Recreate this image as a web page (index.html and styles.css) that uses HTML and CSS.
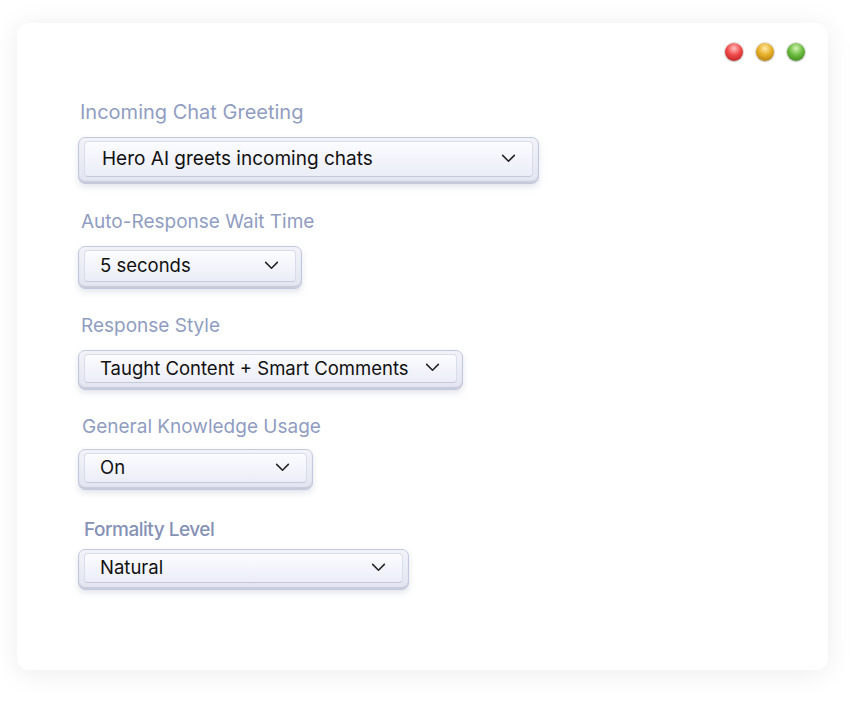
FILE: index.html
```html
<!DOCTYPE html>
<html lang="en">
<head>
    <meta charset="UTF-8">
    <meta name="viewport" content="width=device-width, initial-scale=1.0">
    <title>Hero AI Settings</title>
    <link rel="stylesheet" href="styles.css">
</head>
<body>
    <div class="window">
        <div class="titlebar">
            <span class="light light-red"></span>
            <span class="light light-yellow"></span>
            <span class="light light-green"></span>
        </div>

        <div class="settings">
            <div class="field field-greeting">
                <label class="field-label">Incoming Chat Greeting</label>
                <div class="select select-greeting">
                    <div class="select-face">
                        <span class="select-value">Hero AI greets incoming chats</span>
                        <svg class="chevron" viewBox="0 0 16 10" width="15" height="9"><path d="M1.5 1.5 L8 8 L14.5 1.5" /></svg>
                    </div>
                </div>
            </div>

            <div class="field field-wait">
                <label class="field-label">Auto-Response Wait Time</label>
                <div class="select select-wait">
                    <div class="select-face">
                        <span class="select-value">5 seconds</span>
                        <svg class="chevron" viewBox="0 0 16 10" width="15" height="9"><path d="M1.5 1.5 L8 8 L14.5 1.5" /></svg>
                    </div>
                </div>
            </div>

            <div class="field field-style">
                <label class="field-label">Response Style</label>
                <div class="select select-style">
                    <div class="select-face">
                        <span class="select-value">Taught Content + Smart Comments</span>
                        <svg class="chevron" viewBox="0 0 16 10" width="15" height="9"><path d="M1.5 1.5 L8 8 L14.5 1.5" /></svg>
                    </div>
                </div>
            </div>

            <div class="field field-knowledge">
                <label class="field-label">General Knowledge Usage</label>
                <div class="select select-knowledge">
                    <div class="select-face">
                        <span class="select-value">On</span>
                        <svg class="chevron" viewBox="0 0 16 10" width="15" height="9"><path d="M1.5 1.5 L8 8 L14.5 1.5" /></svg>
                    </div>
                </div>
            </div>

            <div class="field field-formality">
                <label class="field-label">Formality Level</label>
                <div class="select select-formality">
                    <div class="select-face">
                        <span class="select-value">Natural</span>
                        <svg class="chevron" viewBox="0 0 16 10" width="15" height="9"><path d="M1.5 1.5 L8 8 L14.5 1.5" /></svg>
                    </div>
                </div>
            </div>
        </div>
    </div>
</body>
</html>
```

FILE: styles.css
```css
body {
    margin: 0;
    padding: 23px 0 39px 17px;
    background-color: #fff;
    font-family: Inter, "Noto Sans", sans-serif;
}
.window {
    width: 811px;
    height: 647px;
    background-color: #fff;
    border-radius: 12px;
    box-shadow: 0 3px 28px rgba(0, 0, 0, 0.08);
    box-sizing: border-box;
    padding: 20px 0 0 61px;
}
.titlebar {
    display: flex;
    justify-content: flex-end;
    gap: 13px;
    padding-right: 23px;
    height: 18px;
}
.light {
    width: 18px;
    height: 18px;
    border-radius: 50%;
    box-shadow: 0 0 0 1px rgba(0, 0, 0, 0.14), 0 1px 2px rgba(0, 0, 0, 0.15);
}
.light-red {
    background: radial-gradient(circle at 50% 30%, #ffc0c0 0, #f04848 45%, #a81818 100%);
}
.light-yellow {
    background: radial-gradient(circle at 50% 30%, #ffeaa6 0, #e6ad25 45%, #a0700b 100%);
}
.light-green {
    background: radial-gradient(circle at 50% 30%, #d2f4b3 0, #69ba3d 45%, #3a7a1c 100%);
}
.settings {
    display: flex;
    flex-direction: column;
    padding-top: 39px;
}
.field-label {
    display: block;
    font-size: 19px;
    line-height: 24px;
    color: #909dc1;
    padding-left: 2px;
    margin-bottom: 13px;
}
.field-greeting .field-label {
    font-size: 20px;
}
.field-wait {
    margin-top: 26px;
}
.field-wait .field-label {
    padding-left: 3px;
    margin-bottom: 12px;
}
.field-style {
    margin-top: 25px;
}
.field-style .field-label {
    padding-left: 3px;
    margin-bottom: 12px;
}
.field-knowledge {
    margin-top: 25px;
}
.field-knowledge .field-label {
    padding-left: 4px;
    margin-bottom: 10px;
}
.field-formality {
    margin-top: 28px;
}
.field-formality .field-label {
    padding-left: 6px;
    margin-bottom: 7px;
    color: #8591b5;
    font-weight: 500;
    letter-spacing: -0.5px;
}
.select {
    box-sizing: border-box;
    border: 1px solid #c3c8de;
    border-radius: 7px;
    background: linear-gradient(#f2f3f9, #e2e5f0);
    padding: 3px 5px 6px 5px;
    box-shadow: 0 3px 6px rgba(60, 70, 110, 0.14), inset 0 -2px 1px rgba(150, 155, 175, 0.35);
}
.select-greeting {
    width: 461px;
    height: 47px;
}
.select-wait {
    width: 224px;
    height: 43px;
}
.select-style {
    width: 385px;
    height: 40px;
}
.select-knowledge {
    width: 235px;
    height: 41px;
}
.select-formality {
    width: 331px;
    height: 41px;
}
.select-face {
    display: flex;
    align-items: center;
    justify-content: space-between;
    height: 100%;
    box-sizing: border-box;
    border: 1px solid #d9dcea;
    border-bottom-color: #c6c9d8;
    border-radius: 4px;
    background: linear-gradient(#fcfcff, #ebedf7);
    padding: 0 16px 2px 15px;
}
.select-greeting .select-face {
    padding-left: 17px;
}
.select-value {
    font-size: 18.5px;
    color: #111;
}
.select-greeting .select-value {
    font-size: 19px;
}
.chevron {
    fill: none;
    stroke: #222;
    stroke-width: 1.7;
    stroke-linecap: round;
    stroke-linejoin: round;
}
```
